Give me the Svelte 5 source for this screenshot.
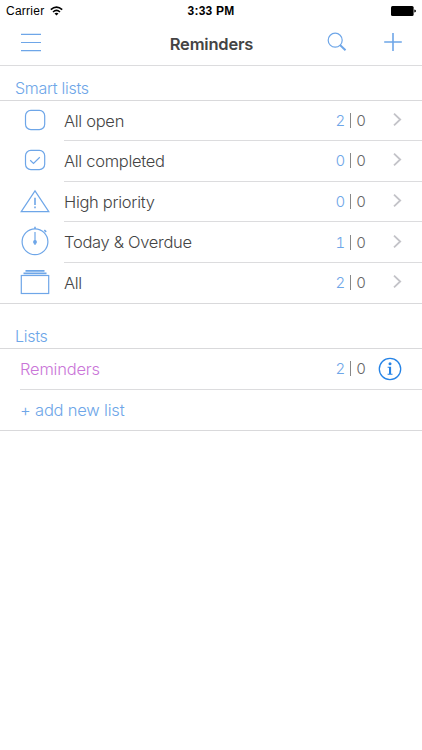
<script>
  let smartLists = [
    { icon: 'open', name: 'All open', open: 2, overdue: 0 },
    { icon: 'completed', name: 'All completed', open: 0, overdue: 0 },
    { icon: 'priority', name: 'High priority', open: 0, overdue: 0 },
    { icon: 'today', name: 'Today & Overdue', open: 1, overdue: 0 },
    { icon: 'all', name: 'All', open: 2, overdue: 0 }
  ];

  let lists = [{ name: 'Reminders', open: 2, overdue: 0 }];
</script>

<div class="screen">
  <div class="status">
    <span class="carrier">
      Carrier
      <svg width="13" height="10" viewBox="0 0 13 10">
        <path d="M0.8 3.7 Q6.5 -1.5 12.2 3.7" />
        <path d="M3 6 Q6.5 2.9 10 6" />
        <path class="wedge" d="M6.5 9.6 L4.5 7.5 Q6.5 6 8.5 7.5 Z" />
      </svg>
    </span>
    <span class="time">3:33 PM</span>
    <svg class="battery" width="25" height="10" viewBox="0 0 25 10">
      <rect x="0" y="0" width="22.6" height="10" rx="1.5" />
      <path d="M23.3 3.4 Q25 3.6 25 5 Q25 6.4 23.3 6.6 Z" />
    </svg>
  </div>

  <div class="nav">
    <button aria-label="Menu">
      <svg width="22" height="20" viewBox="0 0 22 20"><path d="M1 2.4H21M1 10.5H21M1 18.6H21" /></svg>
    </button>
    <h1>Reminders</h1>
    <div class="actions">
      <button aria-label="Search">
        <svg width="20" height="20" viewBox="0 0 20 20">
          <circle cx="8.2" cy="8.2" r="7" />
          <path d="M13 13 L18.5 18.3" stroke-width="2" />
        </svg>
      </button>
      <button aria-label="Add">
        <svg width="20" height="20" viewBox="0 0 20 20"><path class="plus" d="M10 1V19M1.2 10H18.8" /></svg>
      </button>
    </div>
  </div>

  <h2>Smart lists</h2>
  <ul class="smart">
    {#each smartLists as list}
      <li>
        <span class="icon">
          <svg width="30" height="30" viewBox="0 0 30 30">
            {#if list.icon === 'open'}
              <rect x="5.5" y="5.4" width="19.2" height="19.2" rx="5.3" />
            {:else if list.icon === 'completed'}
              <rect x="5.5" y="5.4" width="19.2" height="19.2" rx="5.3" />
              <path d="M10.2 15.2 L13.5 18.4 L19.8 12.2" />
            {:else if list.icon === 'priority'}
              <path d="M15 4.8 L28.8 25.6 H1.2 Z" />
              <path class="thick" d="M15 11.8 V19" />
              <path class="thick" d="M15 20.6 V22.2" />
            {:else if list.icon === 'today'}
              <circle cx="15" cy="15.7" r="12.9" />
              <path d="M15 6 V19" />
              <path class="thick" d="M15 0.8 V3" />
              <path class="thick" d="M24.3 4.2 L26.2 5.8" />
              <circle class="dot" cx="15" cy="16" r="1.3" />
            {:else}
              <rect x="1.3" y="8.5" width="27.4" height="18" />
              <path class="thick" d="M3.5 6.4 H26.5 M5.5 3.9 H24.5" />
            {/if}
          </svg>
        </span>
        <div class="cell">
          <span class="name">{list.name}</span>
          <span class="count"><b>{list.open}</b><i></i>{list.overdue}</span>
          <svg class="chevron" width="9" height="15" viewBox="0 0 9 15"><path d="M1 1.7 L7.2 7.5 L1 13.3" /></svg>
        </div>
      </li>
    {/each}
  </ul>

  <h2 class="second">Lists</h2>
  <ul class="custom">
    {#each lists as list}
      <li>
        <div class="cell">
          <span class="name pink">{list.name}</span>
          <span class="count"><b>{list.open}</b><i></i>{list.overdue}</span>
          <svg class="info" width="24" height="24" viewBox="0 0 24 24">
            <circle cx="12" cy="12" r="10.7" />
            <circle class="fill" cx="12" cy="6.8" r="1.5" />
            <path class="fill" d="M9.6 9.7 H13.1 V16.8 H14.5 V17.8 H9.6 V16.8 H11 V10.7 H9.6 Z" />
          </svg>
        </div>
      </li>
    {/each}
    <li>
      <div class="cell">
        <span class="name add">+ add new list</span>
      </div>
    </li>
  </ul>
</div>

<style>
  :global(body) {
    margin: 0;
    background: #fff;
  }

  .screen {
    height: 750px;
    overflow: hidden;
    background: #fff;
    color: #444;
    font-family: Inter, "Liberation Sans", sans-serif;
    font-weight: 300;
  }

  svg {
    display: block;
    fill: none;
    stroke: #6ea6e8;
    stroke-width: 1.2;
  }

  .thick,
  .plus {
    stroke-width: 1.6;
  }

  .dot {
    fill: #6ea6e8;
  }

  /* status bar */

  .status {
    display: grid;
    grid-template-columns: 1fr auto 1fr;
    align-items: center;
    box-sizing: border-box;
    height: 22px;
    padding: 0 6px;
    color: #000;
    font-family: "Liberation Sans", sans-serif;
    font-weight: 400;
    font-size: 12px;
  }

  .carrier {
    display: flex;
    align-items: center;
    gap: 6px;
    letter-spacing: 0.25px;
  }

  .carrier svg {
    stroke: #000;
    stroke-width: 1.6;
  }

  .carrier .wedge {
    fill: #000;
    stroke: none;
  }

  .time {
    font-weight: 700;
    letter-spacing: 0.2px;
  }

  .battery {
    justify-self: end;
    fill: #000;
    stroke: none;
  }

  /* navigation bar */

  .nav {
    display: grid;
    grid-template-columns: 1fr auto 1fr;
    align-items: center;
    box-sizing: border-box;
    height: 44px;
    padding: 0 19px 3px 20px;
    border-bottom: 1px solid #dcdcde;
  }

  button {
    padding: 0;
    border: none;
    background: none;
  }

  .nav > button {
    justify-self: start;
  }

  h1 {
    margin: 3px 0 0;
    font-size: 16.5px;
    font-weight: 600;
    letter-spacing: -0.2px;
  }

  .actions {
    display: flex;
    justify-content: flex-end;
    gap: 36px;
  }

  /* sections */

  h2 {
    box-sizing: border-box;
    height: 34px;
    margin: 0;
    padding: 11px 0 0 15px;
    color: #6ea6e8;
    font-size: 16px;
    font-weight: 300;
    line-height: 22px;
    letter-spacing: -0.27px;
  }

  h2.second {
    height: 44px;
    padding-top: 21px;
  }

  ul {
    margin: 0;
    padding: 0;
    list-style: none;
    border-top: 1px solid #d9d9db;
    border-bottom: 1px solid #d9d9db;
  }

  li {
    display: flex;
    height: 40.6px;
  }

  li:first-child {
    height: 40.2px;
  }

  .custom li:first-child {
    height: 40.6px;
  }

  li:last-child {
    height: 40px;
  }

  .icon {
    flex: none;
    box-sizing: border-box;
    width: 64px;
    padding: 4px 0 0 20px;
  }

  .cell {
    display: flex;
    flex: 1;
    align-items: center;
    box-sizing: border-box;
    border-bottom: 1px solid #dcdcde;
  }

  .custom .cell {
    margin-left: 20px;
  }

  li:last-child .cell {
    border-bottom: none;
  }

  .name {
    flex: 1;
    font-size: 16.5px;
    letter-spacing: -0.3px;
    white-space: nowrap;
  }

  .pink {
    color: #ca76d8;
    letter-spacing: -0.2px;
  }

  .add {
    color: #6ea6e8;
    letter-spacing: -0.2px;
  }

  .count {
    display: flex;
    align-items: center;
    color: #666;
    font-size: 15px;
    font-variant-numeric: tabular-nums;
  }

  .count b {
    color: #6ea6e8;
    font-weight: 300;
  }

  .count i {
    width: 1px;
    height: 15px;
    margin: 0 5px;
    background: #888;
  }

  .chevron {
    margin: 0 20px 2px 27px;
    stroke: #c3c3c8;
    stroke-width: 1.8;
  }

  .info {
    margin: 0 20px 0 12px;
    stroke: #2583e6;
    stroke-width: 1.3;
  }

  .info .fill {
    fill: #2583e6;
    stroke: none;
  }
</style>
